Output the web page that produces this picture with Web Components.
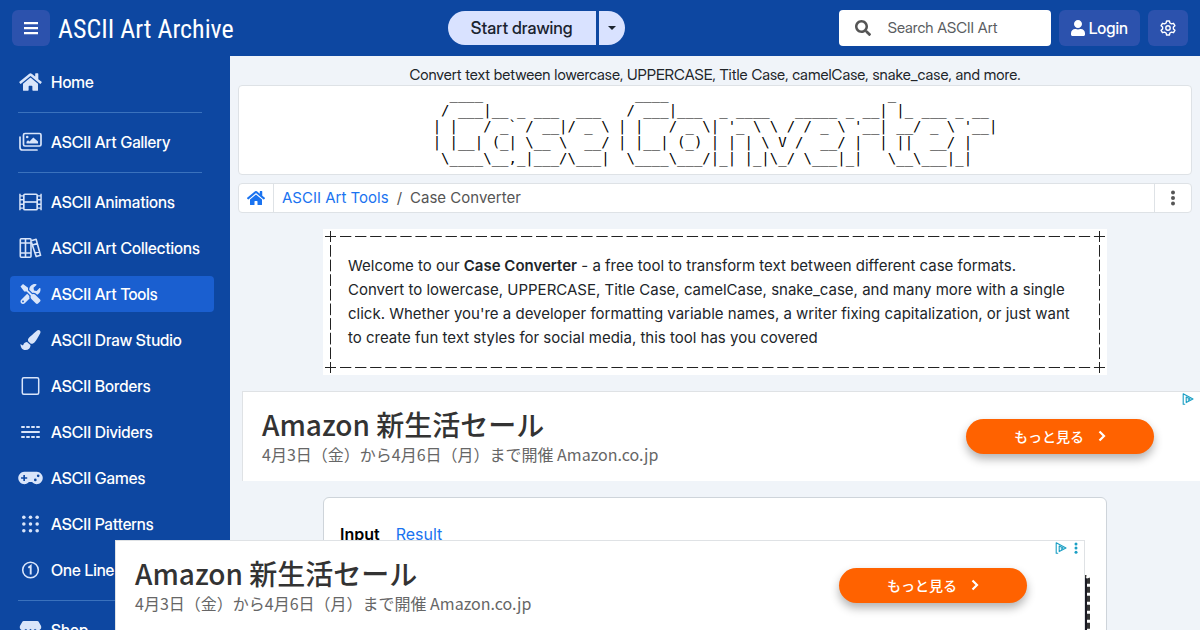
<!DOCTYPE html>
<html lang="en">
<head>
<meta charset="utf-8">
<meta name="viewport" content="width=device-width, initial-scale=1">
<title>Case Converter - ASCII Art Archive</title>
<style>
  body {
    margin: 0;
    background: #f0f4f9;
    color: #212529;
    font: 15px/24px Inter, "Noto Sans CJK JP", sans-serif;
  }
</style>
</head>
<body>

<app-shell>
  <app-header slot="header"></app-header>

  <side-nav slot="nav">
    <nav-item icon="home">Home</nav-item>
    <hr>
    <nav-item icon="images">ASCII Art Gallery</nav-item>
    <hr>
    <nav-item icon="film">ASCII Animations</nav-item>
    <nav-item icon="books">ASCII Art Collections</nav-item>
    <nav-item icon="tools" active>ASCII Art Tools</nav-item>
    <nav-item icon="brush">ASCII Draw Studio</nav-item>
    <nav-item icon="square">ASCII Borders</nav-item>
    <nav-item icon="dividers">ASCII Dividers</nav-item>
    <nav-item icon="gamepad">ASCII Games</nav-item>
    <nav-item icon="grid">ASCII Patterns</nav-item>
    <nav-item icon="one">One Line Art</nav-item>
    <hr>
    <nav-item icon="shop">Shop</nav-item>
  </side-nav>

  <page-banner>
    <span slot="summary">Convert text between lowercase, UPPERCASE, Title Case, camelCase, snake_case, and more.</span>
  </page-banner>
  <bread-crumb>
    <a slot="parent" href="#tools">ASCII Art Tools</a>
    Case Converter
  </bread-crumb>
  <ascii-frame>
    Welcome to our <b>Case Converter</b> - a free tool to transform text between different case formats. Convert to lowercase, UPPERCASE, Title Case, camelCase, snake_case, and many more with a single click. Whether you're a developer formatting variable names, a writer fixing capitalization, or just want to create fun text styles for social media, this tool has you covered
  </ascii-frame>
  <ad-banner>
    <span slot="title">Amazon 新生活セール</span>
    <span slot="text">4月3日（金）から4月6日（月）まで開催 Amazon.co.jp</span>
  </ad-banner>
  <converter-card></converter-card>

  <ad-banner slot="anchor">
    <span slot="title">Amazon 新生活セール</span>
    <span slot="text">4月3日（金）から4月6日（月）まで開催 Amazon.co.jp</span>
  </ad-banner>
</app-shell>

<script>
const ICONS = {
  home: ['0 0 576 512', '<path d="M280.37 148.26L96 300.11V464a16 16 0 0 0 16 16l112.06-.29a16 16 0 0 0 15.92-16V368a16 16 0 0 1 16-16h64a16 16 0 0 1 16 16v95.64a16 16 0 0 0 16 16.05L464 480a16 16 0 0 0 16-16V300L295.67 148.26a12.19 12.19 0 0 0-15.3 0zM571.6 251.47L488 182.56V44.05a12 12 0 0 0-12-12h-56a12 12 0 0 0-12 12v72.61L318.47 43a48 48 0 0 0-61 0L4.34 251.47a12 12 0 0 0-1.6 16.9l25.5 31A12 12 0 0 0 45.15 301l235.22-193.74a12.19 12.19 0 0 1 15.3 0L530.9 301a12 12 0 0 0 16.9-1.6l25.5-31a12 12 0 0 0-1.7-16.93z"/>'],
  images: ['0 0 24 20', '<g fill="none" stroke="currentColor" stroke-width="1.7" stroke-linejoin="round" stroke-linecap="round"><rect x="5" y="1.5" width="17.5" height="12.5" rx="1.5"/><path d="M1.5 5v10.5a2.5 2.5 0 0 0 2.5 2.5H18.5"/></g><circle cx="8.7" cy="5" r="1.3"/><path d="M8 11.5V9.8l1.5-1.5 1.5 1.3 3.8-4.2 4.7 4.2v1.9z"/>'],
  film: ['0 0 22 18', '<g fill="none" stroke="currentColor" stroke-width="1.5"><rect x="5" y="2" width="12" height="14" rx="1"/><path d="M5 9h12"/><path d="M1.5 1.5v15M20.5 1.5v15M1.5 3.5H5M1.5 7H5M1.5 11H5M1.5 14.5H5M17 3.5h3.5M17 7h3.5M17 11h3.5M17 14.5h3.5" stroke-width="1.3"/></g>'],
  books: ['1 1 22 20', '<g fill="none" stroke="currentColor" stroke-width="1.6" stroke-linejoin="round"><rect x="1.8" y="1.8" width="10.7" height="18.4" rx="1"/><path d="M7 1.8v18.4M1.8 6H13M1.8 16H12.5M12.8 3.7l4.8-1.5L22 18.3l-4.3 1.3L13 5.5M14 8l4.8-1.5M16.5 16l4.8-1.5"/></g>'],
  tools: ['0 0 512 512', '<path d="M501.1 395.7L384 278.6c-23.1-23.1-57.6-27.6-85.4-13.9L192 158.1V96L64 0 0 64l96 128h62.1l106.6 106.6c-13.6 27.8-9.2 62.3 13.9 85.4l117.1 117.1c14.6 14.6 38.2 14.6 52.7 0l52.7-52.7c14.5-14.6 14.5-38.2 0-52.7zM331.7 225c28.3 0 54.9 11 74.9 31l19.4 19.4c15.8-6.9 30.8-16.5 43.8-29.5 37.1-37.1 49.7-89.3 37.9-136.7-2.2-9-13.5-12.1-20.1-5.5l-74.4 74.4-67.9-11.3L334 98.9l74.4-74.4c6.6-6.6 3.4-17.9-5.7-20.2-47.4-11.7-99.6.9-136.6 37.9-28.5 28.5-41.9 66.1-41.2 103.6l82.1 82.1c8.1-1.9 16.5-2.9 24.7-2.9zm-103.9 82l-56.7-56.7L18.7 402.8c-25 25-25 65.5 0 90.5s65.5 25 90.5 0l123.6-123.6c-7.6-19.9-9.9-41.6-5-62.7zM64 472c-13.2 0-24-10.8-24-24 0-13.3 10.7-24 24-24s24 10.7 24 24c0 13.2-10.7 24-24 24z"/>'],
  brush: ['0 0 512 512', '<path d="M167.02 309.34c-40.12 2.58-76.53 17.86-97.19 72.3-2.35 6.21-8 9.98-14.59 9.98-11.11 0-45.46-27.67-55.25-34.35C0 439.62 37.93 512 128 512c75.86 0 128-43.77 128-120.19 0-3.11-.65-6.08-.97-9.13l-88.01-73.34zM457.89 0c-15.16 0-29.37 6.71-40.21 16.45C213.27 199.05 192 203.34 192 257.09c0 13.7 3.25 26.76 8.73 38.7l63.82 53.18c7.21 1.8 14.64 3.03 22.39 3.03 62.11 0 98.11-45.47 211.16-256.46 7.38-14.35 13.9-29.85 13.9-45.99C512 20.64 486 0 457.89 0z"/>'],
  square: ['0 0 20 20', '<rect x="1.8" y="1.8" width="16.4" height="16.4" rx="1.5" fill="none" stroke="currentColor" stroke-width="1.5"/>'],
  dividers: ['0 0 20 20', '<g fill="none" stroke="currentColor" stroke-width="2" stroke-linecap="round"><path d="M1.5 5h2M6.5 5h2M11.5 5h2M16.5 5h2M1.5 15h2M6.5 15h2M11.5 15h2M16.5 15h2M1.5 10h17"/></g>'],
  gamepad: ['.8 .5 24.4 13', '<path fill-rule="evenodd" d="M7 1a6 6 0 1 0 4.5 10h3A6 6 0 1 0 19 1zM6 4h1.6v2.2h2.2v1.6H7.6V10H6V7.8H3.8V6.2H6zM20.5 3.6a1.3 1.3 0 1 1 0 2.6 1.3 1.3 0 0 1 0-2.6zM17.7 7.6a1.3 1.3 0 1 1 0 2.6 1.3 1.3 0 0 1 0-2.6z"/>'],
  grid: ['0 0 18 18', '<circle cx="3" cy="3" r="1.6"/><circle cx="9" cy="3" r="1.6"/><circle cx="15" cy="3" r="1.6"/><circle cx="3" cy="9" r="1.6"/><circle cx="9" cy="9" r="1.6"/><circle cx="15" cy="9" r="1.6"/><circle cx="3" cy="15" r="1.6"/><circle cx="9" cy="15" r="1.6"/><circle cx="15" cy="15" r="1.6"/>'],
  one: ['0 0 20 20', '<g fill="none" stroke="currentColor" stroke-width="1.6"><circle cx="10" cy="10" r="7.8"/><path d="M7.8 7.8L10.2 6v8.5" stroke-width="1.9"/></g>'],
  shop: ['0 0 24 22', '<path d="M4.5 1h15a1.5 1.5 0 0 1 1.3.7l2.7 4.5C24.5 9 23 11 20.5 11S17 9.5 17 9.5 16 11 14.5 11 12 9.5 12 9.5 11 11 9.5 11 7 9.5 7 9.5 6 11 3.5 11-.5 9 .5 6.2l2.7-4.5A1.5 1.5 0 0 1 4.5 1zM3 12.5h3V17h12v-4.5h3V21H3z"/>'],
  bars: ['1 1 14 14', '<path d="M1 2h14v2.2H1zM1 7h14v2.2H1zM1 12h14v2.2H1z"/>'],
  search: ['0 0 512 512', '<path d="M505 442.7L405.3 343c-4.5-4.5-10.6-7-17-7H372c27.6-35.3 44-79.7 44-128C416 93.1 322.9 0 208 0S0 93.1 0 208s93.1 208 208 208c48.3 0 92.7-16.4 128-44v16.3c0 6.4 2.5 12.5 7 17l99.7 99.7c9.4 9.4 24.6 9.4 33.9 0l28.3-28.3c9.4-9.4 9.4-24.6.1-34zM208 336c-70.7 0-128-57.2-128-128 0-70.7 57.2-128 128-128 70.7 0 128 57.2 128 128 0 70.7-57.2 128-128 128z"/>'],
  user: ['0 0 448 512', '<path d="M224 256c70.7 0 128-57.3 128-128S294.7 0 224 0 96 57.3 96 128s57.3 128 128 128zm89.6 32h-16.7c-22.2 10.2-46.9 16-72.9 16s-50.6-5.8-72.9-16h-16.7C60.2 288 0 348.2 0 422.4V464c0 26.5 21.5 48 48 48h352c26.5 0 48-21.5 48-48v-41.6c0-74.2-60.2-134.4-134.4-134.4z"/>'],
  gear: ['0 0 16 16', '<g fill="none" stroke="currentColor" stroke-width="1.4" stroke-linejoin="round"><path d="M6.6 1h2.8l.5 2 1.6.9 2-.6 1.4 2.4L13.4 7.1v1.8l1.5 1.4-1.4 2.4-2-.6-1.6.9-.5 2H6.6l-.5-2-1.6-.9-2 .6-1.4-2.4 1.5-1.4V7.1L1.1 5.7l1.4-2.4 2 .6L6.1 3z"/><circle cx="8" cy="8" r="2.2"/></g>'],
  caret: ['0 0 8 4', '<path d="M0 0h8L4 4z"/>'],
  dots: ['0 0 4 16', '<circle cx="2" cy="2.5" r="2"/><circle cx="2" cy="8" r="2"/><circle cx="2" cy="13.5" r="2"/>'],
  chevron: ['0 0 8 12', '<path d="M1.5 1.5L6 6l-4.5 4.5" fill="none" stroke="currentColor" stroke-width="2.2"/>'],
  adchoices: ['0 0 12 12', '<path d="M3.2 11.2H1.2V.8L11 6 4.2 9.6V4L8 6 5.8 7.2" fill="none" stroke="currentColor" stroke-width="1.1" stroke-linejoin="round"/>'],
};

/**
 * Inline icon, sized by --w and --h
 */
class UiIcon extends HTMLElement {
  connectedCallback() {
    const [box, body] = ICONS[this.getAttribute('name')];
    this.attachShadow({ mode: 'open' }).innerHTML = `
      <style>
        :host { display: inline-flex; flex: none; }
        svg { display: block; width: var(--w, 16px); height: var(--h, 16px); fill: currentColor; }
      </style>
      <svg viewBox="${box}" aria-hidden="true">${body}</svg>
    `;
  }
}

/**
 * Page frame: header on top, navigation at the left, content in the default slot
 */
class AppShell extends HTMLElement {
  connectedCallback() {
    this.attachShadow({ mode: 'open' }).innerHTML = `
      <style>
        :host { display: flex; flex-direction: column; height: 100vh; overflow: hidden; }
        .body { display: grid; grid-template-columns: 230px minmax(0, 1fr); flex: 1; min-height: 0; }
        main {
          display: flex;
          flex-direction: column;
          padding: 8px;
          overflow: hidden auto;
          scrollbar-width: none;
        }
        .anchor { position: fixed; bottom: 0; left: 0; right: 0; display: flex; justify-content: center; }
      </style>
      <slot name="header"></slot>
      <div class="body">
        <slot name="nav"></slot>
        <main><slot></slot></main>
      </div>
      <div class="anchor"><slot name="anchor"></slot></div>
    `;
  }
}

class AppHeader extends HTMLElement {
  connectedCallback() {
    this.attachShadow({ mode: 'open' }).innerHTML = `
      <style>
        :host {
          display: flex;
          align-items: center;
          justify-content: space-between;
          flex: none;
          height: 56px;
          padding: 0 12px;
          box-sizing: border-box;
          background: #0d47a1;
          color: #fff;
          font-family: "Inter Display", Inter, sans-serif;
        }
        button {
          display: flex;
          align-items: center;
          justify-content: center;
          margin: 0;
          border: 0;
          font: inherit;
          font-weight: 500;
          color: inherit;
          cursor: pointer;
        }
        .group { display: flex; align-items: center; gap: 8px; }
        .btn {
          gap: 4px;
          height: 36px;
          padding: 0 12px;
          border-radius: 6px;
          background: #2c52ad;
          font-size: 16px;
        }
        .brand {
          padding-top: 2px;
          color: #fff;
          font: 26px/36px "Roboto Condensed", "Open Sans Condensed", sans-serif;
          text-decoration: none;
          white-space: nowrap;
        }
        .split { display: flex; gap: 3px; color: #1b2430; }
        .split button { height: 34px; background: #d9e2ff; font-size: 17px; }
        .split .start { padding: 0 23px; border-radius: 17px 0 0 17px; }
        .split .more { padding: 0 9px; border-radius: 0 17px 17px 0; }
        .search {
          display: flex;
          align-items: center;
          gap: 17px;
          width: 212px;
          height: 36px;
          padding: 0 16px;
          box-sizing: border-box;
          border-radius: 4px;
          background: #fff;
          color: #555;
        }
        input {
          flex: 1;
          min-width: 0;
          padding: 0;
          border: 0;
          outline: 0;
          background: none;
          font: inherit;
        }
        input::placeholder { color: #5a5d61; opacity: 1; }
      </style>
      <div class="group">
        <button class="btn" aria-label="Menu"><ui-icon name="bars" style="--w: 14px; --h: 14px"></ui-icon></button>
        <a class="brand" href="#top">ASCII Art Archive</a>
      </div>
      <div class="split">
        <button class="start">Start drawing</button>
        <button class="more" aria-label="More"><ui-icon name="caret" style="--w: 8px; --h: 4px"></ui-icon></button>
      </div>
      <div class="group">
        <label class="search">
          <ui-icon name="search"></ui-icon>
          <input type="search" placeholder="Search ASCII Art" aria-label="Search ASCII Art">
        </label>
        <button class="btn"><ui-icon name="user" style="--w: 14px; --h: 16px"></ui-icon>Login</button>
        <button class="btn" aria-label="Settings"><ui-icon name="gear"></ui-icon></button>
      </div>
    `;
  }
}

class SideNav extends HTMLElement {
  connectedCallback() {
    this.attachShadow({ mode: 'open' }).innerHTML = `
      <style>
        :host { display: block; overflow: hidden; background: #0d47a1; color: #fff; }
        nav { display: flex; flex-direction: column; gap: 10px; padding: 8px 16px 8px 10px; }
        ::slotted(hr) { margin: 2px 12px 1px 8px; border: 0; border-top: 1px solid #3a72bd; }
      </style>
      <nav><slot></slot></nav>
    `;
  }
}

class NavItem extends HTMLElement {
  connectedCallback() {
    const icon = this.getAttribute('icon');
    this.attachShadow({ mode: 'open' }).innerHTML = `
      <style>
        :host { display: block; border-radius: 4px; }
        :host([active]) { background: #1a5fd0; }
        a {
          display: flex;
          align-items: center;
          gap: 8px;
          height: 36px;
          padding: 0 8px;
          color: inherit;
          font-family: "Inter Display", Inter, sans-serif;
          font-size: 16px;
          font-weight: 500;
          text-decoration: none;
          white-space: nowrap;
        }
        ui-icon { --w: 25px; --h: 20px; color: #d9e5fa; }
      </style>
      <a href="#${icon}"><ui-icon name="${icon}"></ui-icon><slot></slot></a>
    `;
  }
}

/* Title of the page in the figlet "standard" font */
const TITLE_ART = String.raw`  ____                  ____                          _            
 / ___|__ _ ___  ___   / ___|___  _ ____   _____ _ __| |_ ___ _ __ 
| |   / _${'`'} / __|/ _ \ | |   / _ \| '_ \ \ / / _ \ '__| __/ _ \ '__|
| |__| (_| \__ \  __/ | |__| (_) | | | \ V /  __/ |  | ||  __/ |   
 \____\__,_|___/\___|  \____\___/|_| |_|\_/ \___|_|   \__\___|_|   `;

class PageBanner extends HTMLElement {
  connectedCallback() {
    this.attachShadow({ mode: 'open' }).innerHTML = `
      <style>
        :host { display: block; text-align: center; }
        p { margin: 0; font-family: "Inter Display", Inter, sans-serif; line-height: 21px; }
        .art {
          display: flex;
          justify-content: center;
          padding: 0 4px 8px;
          border: 1px solid #dee2e6;
          border-radius: 4px;
          background: #fff;
        }
        pre {
          margin: 0;
          color: #000;
          font: 14px/16px "DejaVu Sans Mono", monospace;
          text-align: left;
        }
      </style>
      <p><slot name="summary"></slot></p>
      <div class="art"><pre></pre></div>
    `;
    this.shadowRoot.querySelector('pre').textContent = TITLE_ART;
  }
}

class BreadCrumb extends HTMLElement {
  connectedCallback() {
    this.attachShadow({ mode: 'open' }).innerHTML = `
      <style>
        :host {
          display: flex;
          margin-top: 8px;
          border: 1px solid #dee2e6;
          border-radius: 4px;
          background: #fff;
          color: #555;
          line-height: 28px;
        }
        .cell { display: flex; align-items: center; justify-content: center; width: 35px; box-sizing: border-box; }
        .home { border-right: 1px solid #dee2e6; color: #1a73f0; }
        button.cell {
          width: 37px;
          padding: 0;
          border: 0;
          border-left: 1px solid #dee2e6;
          background: none;
          color: inherit;
        }
        .trail { display: flex; flex: 1; gap: 8px; padding: 0 8px; }
        ::slotted(a) { color: #1a73f0; text-decoration: none; }
      </style>
      <a class="cell home" href="#home" aria-label="Home"><ui-icon name="home" style="--w: 18px"></ui-icon></a>
      <div class="trail"><slot name="parent"></slot><span>/</span><span><slot></slot></span></div>
      <button class="cell" aria-label="Options"><ui-icon name="dots" style="--w: 4px"></ui-icon></button>
    `;
  }
}

/**
 * Text box with a drawn +---+ border
 */
class AsciiFrame extends HTMLElement {
  connectedCallback() {
    this.attachShadow({ mode: 'open' }).innerHTML = `
      <style>
        :host {
          display: block;
          position: relative;
          align-self: center;
          width: 100%;
          max-width: 784px;
          margin-top: 16px;
          padding: 25px 33px 25px 25px;
          box-sizing: border-box;
          background: #fff;
        }
        ::slotted(b) { font-weight: 600; }
        .h, .v, .c { position: absolute; }
        .h { left: 17px; right: 13px; height: 1px; background: linear-gradient(90deg, #222 11px, transparent 11px) 0 0 / 15px 1px round; }
        .v { top: 16px; bottom: 13px; width: 1px; background: linear-gradient(#222 12px, transparent 12px) 0 0 / 1px 15px round; }
        .c { width: 11px; height: 11px; background: linear-gradient(#222, #222) center / 11px 1px no-repeat, linear-gradient(#222, #222) center / 1px 11px no-repeat; }
        .t { top: 7px; }
        .b { bottom: 7px; }
        .l { left: 7px; }
        .r { right: 7px; }
        .c.t { top: 2px; }
        .c.b { bottom: 2px; }
        .c.l { left: 2px; }
        .c.r { right: 2px; }
      </style>
      <i class="h t"></i><i class="h b"></i><i class="v l"></i><i class="v r"></i>
      <i class="c t l"></i><i class="c t r"></i><i class="c b l"></i><i class="c b r"></i>
      <slot></slot>
    `;
  }
}

/**
 * 970x90 leaderboard ad
 */
class AdBanner extends HTMLElement {
  connectedCallback() {
    this.attachShadow({ mode: 'open' }).innerHTML = `
      <style>
        :host {
          display: flex;
          flex: none;
          position: relative;
          align-items: center;
          justify-content: space-between;
          width: 970px;
          height: 90px;
          padding: 0 57px 0 19px;
          box-sizing: border-box;
          border: 1px solid #dfe2e5;
          border-bottom: 0;
          background: #fff;
          font-family: "Noto Sans CJK JP", sans-serif;
        }
        :host(:not([slot])) { margin: 16px 0 0 4px; }
        .copy { padding-top: 1px; }
        .title { color: #333; font-size: 28px; font-weight: 500; line-height: 35px; }
        .text { color: #666; font-size: 16px; line-height: 25px; }
        button {
          display: flex;
          align-items: center;
          justify-content: center;
          gap: 14px;
          width: 188px;
          height: 35px;
          padding: 0 0 2px;
          border: 0;
          border-radius: 18px;
          background: #ff6200;
          box-shadow: 0 5px 10px rgba(0, 0, 0, .3);
          color: #fff;
          font: 500 14px/20px "Noto Sans CJK JP", sans-serif;
        }
        .marks { position: absolute; top: 1px; right: 6px; display: flex; align-items: center; gap: 7px; color: #1a9fc4; }
      </style>
      <div class="copy">
        <div class="title"><slot name="title"></slot></div>
        <div class="text"><slot name="text"></slot></div>
      </div>
      <button>もっと見る<ui-icon name="chevron" style="--w: 8px; --h: 12px"></ui-icon></button>
      <div class="marks">
        <ui-icon name="adchoices" style="--w: 12px; --h: 12px"></ui-icon>
        <ui-icon name="dots" style="--w: 4px; --h: 12px"></ui-icon>
      </div>
    `;
  }
}

class ConverterCard extends HTMLElement {
  connectedCallback() {
    this.attachShadow({ mode: 'open' }).innerHTML = `
      <style>
        :host {
          display: block;
          flex: none;
          align-self: center;
          width: 100%;
          max-width: 784px;
          margin-top: 16px;
          padding: 24px 16px;
          box-sizing: border-box;
          border: 1px solid #ced4da;
          border-radius: 6px;
          background: #fff;
        }
        .tabs { display: flex; gap: 16px; font-size: 16px; }
        a { color: #1a73f0; text-decoration: none; }
        a.on { color: #000; font-weight: 600; }
        textarea {
          display: block;
          width: 100%;
          height: 200px;
          margin: 29px 0 0;
          box-sizing: border-box;
          border: 3px dashed #333;
          border-radius: 4px;
          background: #1a1a24 padding-box;
          color: #fff;
          resize: none;
        }
      </style>
      <div class="tabs"><a class="on" href="#input">Input</a><a href="#result">Result</a></div>
      <textarea aria-label="Input"></textarea>
    `;
  }
}

customElements.define('ui-icon', UiIcon);
customElements.define('app-shell', AppShell);
customElements.define('app-header', AppHeader);
customElements.define('side-nav', SideNav);
customElements.define('nav-item', NavItem);
customElements.define('page-banner', PageBanner);
customElements.define('bread-crumb', BreadCrumb);
customElements.define('ascii-frame', AsciiFrame);
customElements.define('ad-banner', AdBanner);
customElements.define('converter-card', ConverterCard);
</script>
</body>
</html>
